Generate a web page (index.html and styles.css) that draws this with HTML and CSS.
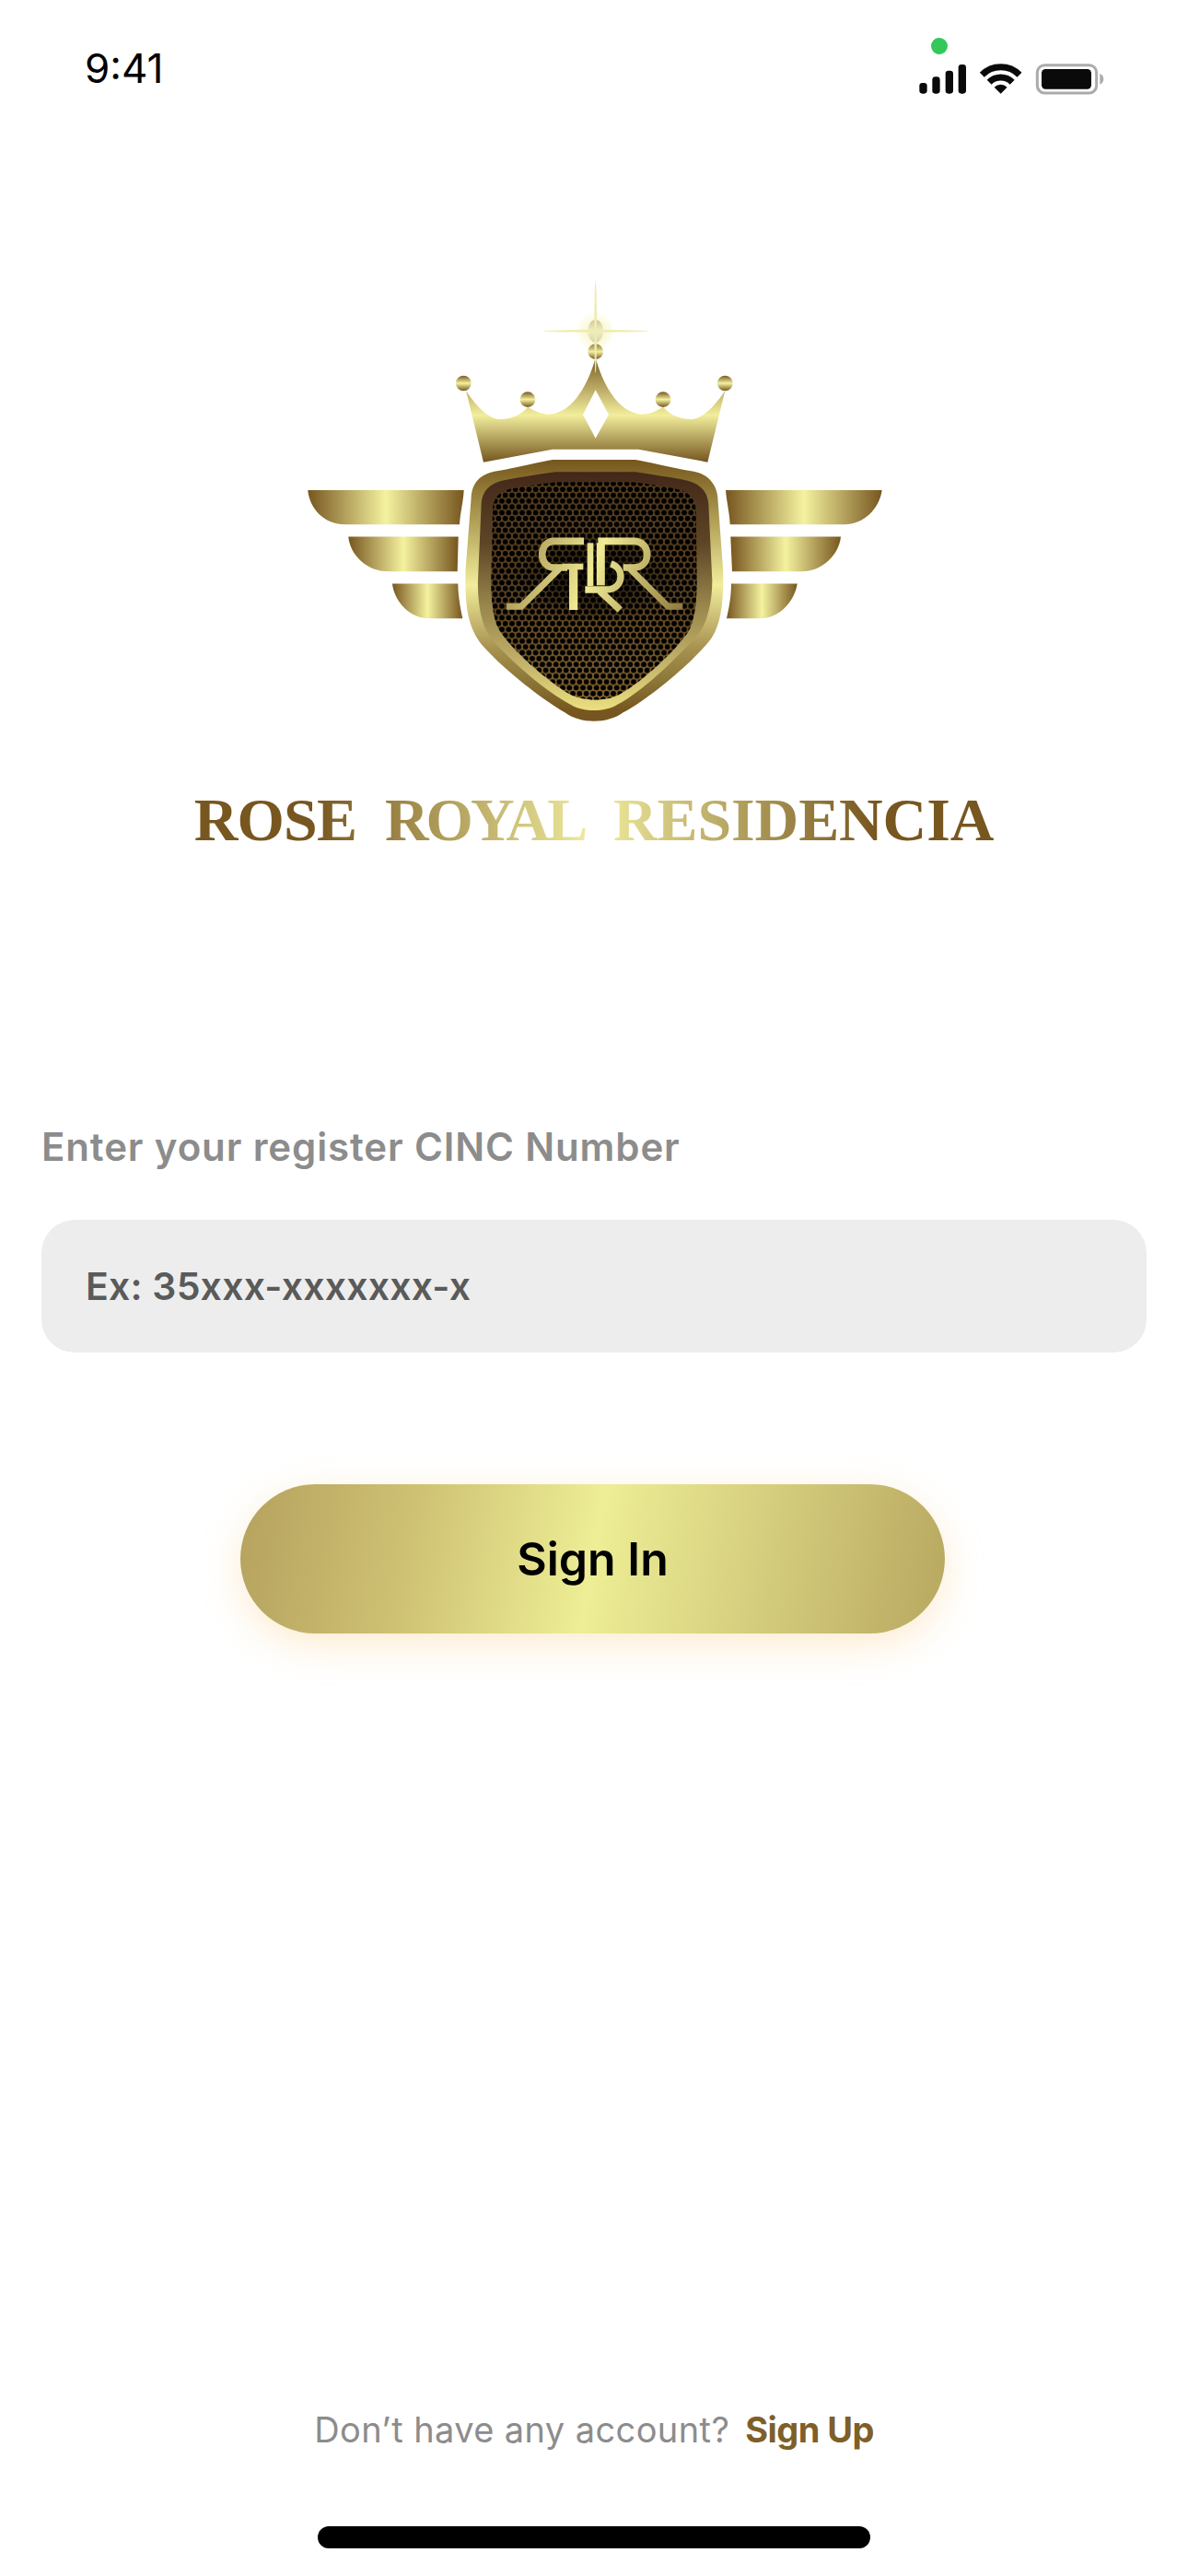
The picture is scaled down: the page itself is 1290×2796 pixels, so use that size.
FILE: index.html
```html
<!DOCTYPE html>
<html lang="en">
<head>
<meta charset="utf-8">
<title>Rose Royal Residencia</title>
<link rel="stylesheet" href="styles.css">
</head>
<body>
<main class="screen">
  <header class="status-bar">
    <span class="clock">9:41</span>
    <svg class="status-icons" viewBox="0 0 230 80" width="230" height="80" aria-hidden="true">
      <g transform="scale(0.3333)">
        <circle cx="120" cy="60" r="27" fill="#34c759"/>
        <g fill="#0a0a0a">
          <rect x="55" y="180" width="25" height="35" rx="10"/>
          <rect x="97" y="160" width="25" height="55" rx="10"/>
          <rect x="140" y="140" width="25" height="75" rx="10"/>
          <rect x="182" y="120" width="25" height="95" rx="10"/>
          <path d="M320 215L299 194A30 30 0 0 1 341 194Z"/>
          <path d="M282.500 177.500A53 53 0 0 1 357.500 177.500" fill="none" stroke="#0a0a0a" stroke-width="21"/>
          <path d="M259 154A86 86 0 0 1 381 154" fill="none" stroke="#0a0a0a" stroke-width="21"/>
          <rect x="453" y="135" width="162" height="65" rx="13"/>
        </g>
        <rect x="439" y="122" width="193" height="91" rx="24" fill="none" stroke="#ababab" stroke-width="9"/>
        <path d="M643 150C651 153 655 160 655 167C655 175 651 182 643 185Z" fill="#ababab"/>
      </g>
    </svg>
  </header>

  <svg class="logo" viewBox="325 305 640 485" width="640" height="485" role="img" aria-label="Rose Royal Residencia crest">
    <defs>
      <linearGradient id="wing">
        <stop offset="0" stop-color="#77561f"/>
        <stop offset=".5" stop-color="#f4f29f"/>
        <stop offset="1" stop-color="#77561f"/>
      </linearGradient>
      <linearGradient id="crown" x1="0" y1="0" x2="0" y2="1">
        <stop offset="0" stop-color="#7a5c24"/>
        <stop offset=".55" stop-color="#f2ee9c"/>
        <stop offset="1" stop-color="#75561f"/>
      </linearGradient>
      <linearGradient id="ball" x1="0" y1="0" x2="0" y2="1">
        <stop offset="0" stop-color="#77561f"/>
        <stop offset=".5" stop-color="#f4f29f"/>
        <stop offset="1" stop-color="#77561f"/>
      </linearGradient>
      <linearGradient id="pearl" x1="0" y1="0" x2="0" y2="1">
        <stop offset="0" stop-color="#cfc693"/>
        <stop offset=".5" stop-color="#f1eecb"/>
        <stop offset="1" stop-color="#d9d3a4"/>
      </linearGradient>
      <radialGradient id="glow">
        <stop offset="0" stop-color="#f4f2a8" stop-opacity=".9"/>
        <stop offset="1" stop-color="#f4f2a8" stop-opacity="0"/>
      </radialGradient>
      <linearGradient id="rim" x1="0" y1="0" x2="0" y2="1">
        <stop offset="0" stop-color="#76571f"/>
        <stop offset=".09" stop-color="#8b7230"/>
        <stop offset=".48" stop-color="#f1ed9b"/>
        <stop offset=".72" stop-color="#a89250"/>
        <stop offset=".84" stop-color="#8c7838"/>
        <stop offset=".96" stop-color="#77561f"/>
        <stop offset="1" stop-color="#75561f"/>
      </linearGradient>
      <linearGradient id="inner" x1="0" y1="0" x2="0" y2="1">
        <stop offset="0" stop-color="#432819"/>
        <stop offset=".3" stop-color="#5e4526"/>
        <stop offset=".55" stop-color="#96844a"/>
        <stop offset=".78" stop-color="#bfae68"/>
        <stop offset="1" stop-color="#eadf80"/>
      </linearGradient>
      <linearGradient id="meshbg" x1="0" y1="0" x2="0" y2="1">
        <stop offset="0" stop-color="#5a4120"/>
        <stop offset=".5" stop-color="#5e4522"/>
        <stop offset="1" stop-color="#8b6a30"/>
      </linearGradient>
      <radialGradient id="shade">
        <stop offset="0" stop-color="#000" stop-opacity=".8"/>
        <stop offset="1" stop-color="#000" stop-opacity="0"/>
      </radialGradient>
      <linearGradient id="mono" gradientUnits="userSpaceOnUse" x1="180" y1="290" x2="755" y2="516">
        <stop offset="0" stop-color="#9c8848"/>
        <stop offset=".48" stop-color="#f0eb94"/>
        <stop offset="1" stop-color="#8f7a3c"/>
      </linearGradient>
      <pattern id="holes" width="22" height="38" patternUnits="userSpaceOnUse">
        <circle cx="11" cy="9.500" r="8.800" fill="#000"/>
        <circle cx="0" cy="28.500" r="8.800" fill="#000"/>
        <circle cx="22" cy="28.500" r="8.800" fill="#000"/>
      </pattern>
      <filter id="soft" x="-50%" y="-50%" width="200%" height="200%"><feGaussianBlur stdDeviation="1.200"/></filter>
    </defs>

    <g fill="url(#wing)">
      <path d="M334.300 532H503.700C503 545 500 555 499 569.300H375C352 569.300 336 552 334.300 532Z"/>
      <path d="M378.300 582.500H497.700L496.700 620.300H421.700C398 620.300 380 602 378.300 582.500Z"/>
      <path d="M426 633.500H497.300C497.500 648 500 660 502.300 671.300H466.700C444 671.300 428 652 426 633.500Z"/>
      <path d="M788 532H957.700C955 552 938 569.300 916.700 569.300H792.700C792 555 789 545 788 532Z"/>
      <path d="M793.300 582.500H913C911 602 893 620.300 870 620.300H795Z"/>
      <path d="M794 633.500H865.700C863 652 847 671.300 825 671.300H789C791.500 660 794 648 794 633.500Z"/>
    </g>

    <g transform="translate(480 300) scale(.33333)">
      <path fill="url(#crown)" d="M500 265C520 340 570 445 650 449C680 449 700 437 720 425C740 447 770 465 810 465C850 465 890 420 922 372L865 605L640 563H360L135 605L78 372C110 420 150 465 190 465C230 465 260 447 280 425C300 437 320 449 350 449C430 445 480 340 500 265Z"/>
      <path fill="#fff" d="M500 370L543 450L500 527L459 450Z"/>
      <g fill="url(#ball)">
        <circle cx="70" cy="348" r="25"/>
        <circle cx="279" cy="401" r="25"/>
        <circle cx="720" cy="401" r="25"/>
        <circle cx="922" cy="348" r="25"/>
        <circle cx="500" cy="245" r="25"/>
      </g>
      <circle cx="500" cy="180" r="65" fill="url(#glow)"/>
      <ellipse cx="500" cy="178" rx="25" ry="37" fill="url(#pearl)"/>
      <ellipse cx="500" cy="178" rx="172" ry="4" fill="#efecb0" filter="url(#soft)"/>
      <ellipse cx="500" cy="165" rx="4" ry="150" fill="#efecb0" filter="url(#soft)"/>
    </g>

    <g transform="translate(490 490) scale(.33333)">
      <path fill="url(#rim)" d="M330 27H600C650 35 720 55 790 65C840 75 865 110 868 150L885 380C890 520 870 590 830 630C750 720 620 820 560 850C510 888 420 888 370 850C300 810 170 710 100 630C60 580 42 520 47 380L65 150C68 100 95 75 140 65C210 55 280 35 330 27Z"/>
      <path fill="url(#inner)" d="M340 67H600C650 75 720 85 770 95C810 105 835 130 838 170L850 420C850 500 830 570 800 600C720 690 610 790 540 825C500 849 430 849 390 825C320 790 200 690 130 610C100 570 85 500 87 420L98 170C100 130 125 105 165 95C220 85 280 75 340 67Z"/>
      <path fill="url(#meshbg)" d="M340 100H590C640 105 700 115 745 125C780 135 795 160 797 190L800 420C800 500 790 560 770 590C720 660 620 750 550 790C510 815 430 815 385 790C310 745 200 650 155 580C135 540 130 480 130 420L135 190C135 150 160 130 190 122C240 115 290 105 340 100Z"/>
      <path fill="url(#holes)" d="M340 100H590C640 105 700 115 745 125C780 135 795 160 797 190L800 420C800 500 790 560 770 590C720 660 620 750 550 790C510 815 430 815 385 790C310 745 200 650 155 580C135 540 130 480 130 420L135 190C135 150 160 130 190 122C240 115 290 105 340 100Z"/>
      <ellipse cx="465" cy="410" rx="270" ry="150" fill="url(#shade)"/>
      <g fill="none" stroke="url(#mono)" stroke-width="23">
        <path d="M432 292H335C310 292 296 312 296 335C296 360 312 378 335 378H378"/>
        <path d="M352 382L228 505H180" stroke-width="21"/>
        <path d="M478 292H595C622 292 638 312 638 335C638 360 622 378 595 378H560"/>
        <path d="M582 382L706 505H754" stroke-width="21"/>
        <path d="M362 375H430" stroke-width="20"/>
        <path d="M398 372V516" stroke-width="28"/>
        <path d="M453 298V438" stroke-width="20"/>
        <path d="M487 298V436" stroke-width="27"/>
        <path d="M436 450H505C538 450 552 428 552 407C552 388 540 372 520 366" stroke-width="22"/>
        <path d="M484 454L550 516" stroke-width="23"/>
      </g>
    </g>
  </svg>

  <h1 class="brand"><span>ROSE</span> <span class="brand-tight">ROYAL</span> <span class="brand-wide">RESIDENCIA</span></h1>

  <form class="signin">
    <label class="field-label" for="cnic">Enter your register CINC Number</label>
    <input class="field" id="cnic" type="text" placeholder="Ex: 35xxx-xxxxxxx-x">
    <button class="submit" type="button">Sign In</button>
  </form>

  <p class="footer">Don’t have any account? <a class="footer-link" href="#">Sign Up</a></p>
  <div class="home-bar"></div>
</main>
</body>
</html>
```

FILE: styles.css
```css
* {
  box-sizing: border-box;
}

html,
body {
  margin: 0;
  padding: 0;
  background: #fff;
}

.screen {
  display: flex;
  flex-direction: column;
  align-items: center;
  width: 1290px;
  height: 2796px;
  overflow: hidden;
  padding-bottom: 30px;
  font-family: Inter, "Noto Sans", sans-serif;
}

.status-bar {
  display: flex;
  justify-content: space-between;
  align-items: flex-start;
  width: 100%;
  height: 110px;
  padding: 30px 80px 0 92px;
}

.clock {
  margin-top: 18px;
  font-size: 44px;
  line-height: 53px;
  font-weight: 400;
  color: #000;
}

.logo {
  display: block;
  margin-top: 195px;
  flex: none;
}

.brand {
  margin: 65px 0 0;
  width: 875px;
  font-family: "Liberation Serif", serif;
  font-size: 66px;
  line-height: 70px;
  font-weight: 700;
  white-space: nowrap;
  text-align: center;
  word-spacing: 15px;
  letter-spacing: -0.8px;
  color: transparent;
  background: linear-gradient(90deg, #77561f 0%, #77561f 15%, #f1ee9f 50%, #77561f 85%, #77561f 100%);
  -webkit-background-clip: text;
  background-clip: text;
}

.brand-tight {
  letter-spacing: -3px;
}

.brand-wide {
  letter-spacing: -0.1px;
}

.signin {
  display: flex;
  flex-direction: column;
  width: 100%;
  padding: 0 45px;
}

.field-label {
  margin-top: 295px;
  font-size: 42px;
  line-height: 50px;
  font-weight: 600;
  letter-spacing: 0.87px;
  color: #8c8c8c;
}

.field {
  display: block;
  width: 100%;
  height: 144px;
  margin-top: 54px;
  padding: 0 48px;
  border: 0;
  border-radius: 36px;
  background: #ededed;
  font-family: inherit;
  font-size: 41px;
  font-weight: 600;
  letter-spacing: 0.2px;
  color: #5a5a5a;
}

.field::placeholder {
  color: #5a5a5a;
  opacity: 1;
}

.submit {
  display: block;
  align-self: center;
  width: 765px;
  height: 162px;
  margin: 143px 0 0 -3px;
  border: 0;
  border-radius: 81px;
  background: linear-gradient(100deg, #b5a25e 0%, #cfc274 25%, #edee95 50%, #d3cb7c 75%, #b8a860 100%);
  box-shadow: 0 12px 40px rgba(250, 200, 120, 0.35);
  font-family: inherit;
  font-size: 50px;
  font-weight: 600;
  color: #000;
}

.footer {
  margin: auto 0 0;
  font-size: 38px;
  line-height: 50px;
  font-weight: 400;
  letter-spacing: 0.4px;
  color: #8c8c8c;
}

.footer-link {
  margin-left: 6px;
  font-weight: 700;
  letter-spacing: -0.6px;
  color: #7f5f28;
  text-decoration: none;
}

.home-bar {
  flex: none;
  width: 600px;
  height: 24px;
  margin-top: 80px;
  border-radius: 12px;
  background: #000;
}
```
